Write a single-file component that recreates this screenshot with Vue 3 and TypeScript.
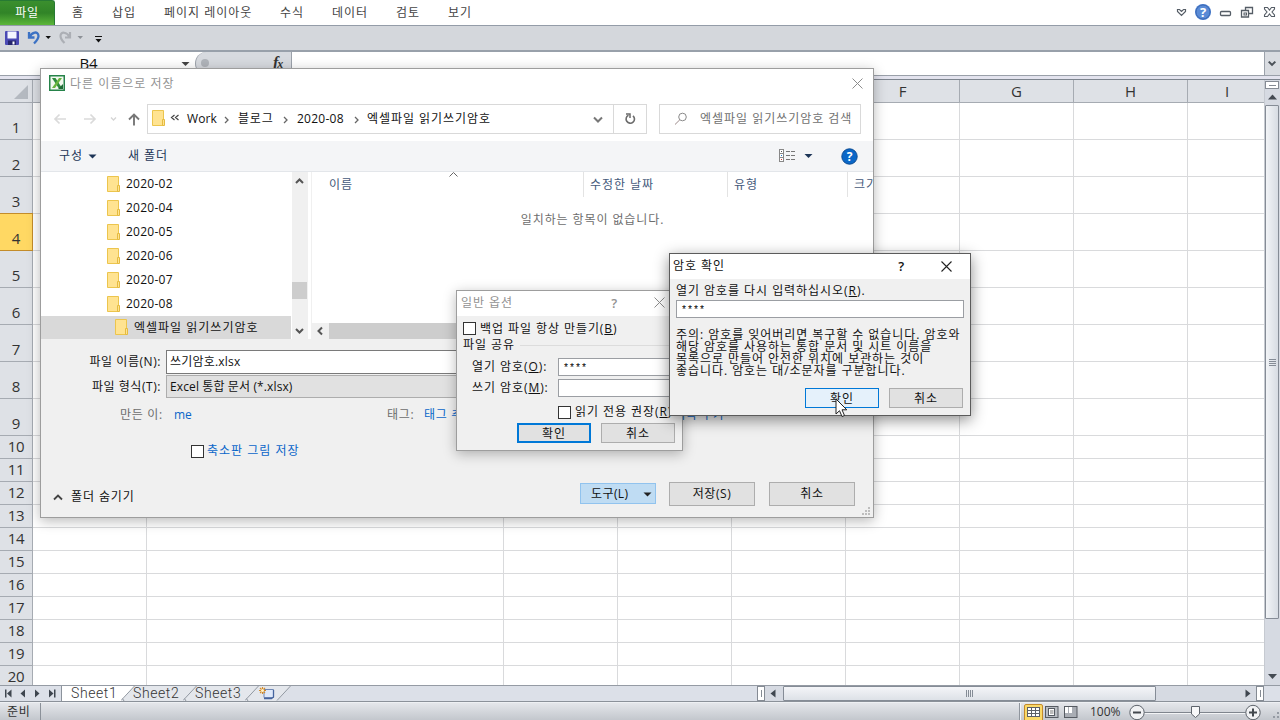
<script setup lang="ts">
interface Row { n: number; h: number }
const menus = [
  { label: '홈', cls: 'm1' },
  { label: '삽입', cls: 'm2' },
  { label: '페이지 레이아웃', cls: 'm3' },
  { label: '수식', cls: 'm4' },
  { label: '데이터', cls: 'm5' },
  { label: '검토', cls: 'm6' },
  { label: '보기', cls: 'm7' },
]
const columns = ['A', 'B', 'C', 'D', 'E', 'F', 'G', 'H', 'I']
const rows: Row[] = Array.from({ length: 20 }, (_, i) => ({ n: i + 1, h: i < 9 ? 37 : 23 }))
const folders = ['2020-02', '2020-04', '2020-05', '2020-06', '2020-07', '2020-08']
const crumbs = [
  { label: 'Work', cls: 'c1' },
  { label: '블로그', cls: 'c2' },
  { label: '2020-08', cls: 'c3' },
]
const warning = [
  { text: '주의: 암호를 잊어버리면 복구할 수 없습니다. 암호와', cls: 'w1' },
  { text: '해당 암호를 사용하는 통합 문서 및 시트 이름을', cls: 'w2' },
  { text: '목록으로 만들어 안전한 위치에 보관하는 것이', cls: 'w3' },
  { text: '좋습니다. 암호는 대/소문자를 구분합니다.', cls: 'w4' },
]
</script>

<template>
  <div class="screen">
    <!-- ribbon tabs -->
    <header class="ribbon">
      <div class="file-tab">파일</div>
      <nav class="menus"><span v-for="m in menus" :key="m.cls" :class="m.cls">{{ m.label }}</span></nav>
      <svg class="wincontrols" width="106" height="25" viewBox="0 0 106 25">
        <path d="M3.500 11.500v-2h2l2 2 2-2h2v2l-4 4z" fill="#fff" stroke="#555d66" stroke-width="1.2" />
        <circle cx="29" cy="12" r="8" fill="#4a7ed0" /><circle cx="29" cy="12" r="7" fill="#5a8bd6" stroke="#3b69b5" />
        <text x="29" y="17" text-anchor="middle" class="qm">?</text>
        <rect x="46.500" y="11.500" width="10" height="4" rx="1" fill="#fff" stroke="#555d66" stroke-width="1.3" />
        <path d="M71.500 7.500h7v6h-7z" fill="#fff" stroke="#555d66" stroke-width="1.3" />
        <path d="M67.500 10.500h7v6.500h-7z" fill="#fff" stroke="#555d66" stroke-width="1.3" />
        <rect x="70" y="13" width="2.500" height="2" fill="none" stroke="#555d66" />
        <path d="M90.500 7.500h3l2 2.500 2-2.500h3v1.500l-2.500 3 2.500 3v1.500h-3l-2-2.500-2 2.500h-3v-1.500l2.500-3-2.500-3z" fill="#fff" stroke="#555d66" stroke-width="1.1" />
      </svg>
    </header>

    <!-- quick access toolbar -->
    <div class="qat">
      <svg width="110" height="24" viewBox="0 0 110 24">
        <rect x="5" y="5" width="14" height="14" rx="1" fill="#4a49b4" />
        <rect x="7.500" y="5.500" width="9" height="7" fill="#f3f5ff" /><rect x="8" y="14.500" width="8" height="4.500" fill="#26266e" /><rect x="12.500" y="15.500" width="2" height="3" fill="#fff" />
        <path d="M29 6v5.500h5.500M29.500 11C32 6 38 4.500 38.500 10c0 3-2 5-4.500 7.500" fill="none" stroke="#3c72c4" stroke-width="2.300" />
        <path d="M45.500 10h5.500l-2.750 3z" fill="#111" />
        <path d="M70 6v5.500h-5M69.500 11C67 6 60.500 5 60.500 10c0 3 2 5 4 7" fill="none" stroke="#acafb5" stroke-width="2.200" />
        <path d="M77.500 10h5.500l-2.750 3z" fill="#8d9197" />
        <path d="M95 10.500h7" stroke="#111" /><path d="M95.500 13h6l-3 3.500z" fill="#111" />
      </svg>
    </div>

    <!-- formula bar -->
    <div class="formula">
      <span class="cellref">B4</span>
      <svg width="16" height="23" viewBox="0 0 16 23"><path d="M4.500 10h8l-4 4z" fill="#444" /></svg>
      <div class="fxbox"><i></i><em>f<small>x</small></em></div>
      <div class="finput"></div>
      <svg class="fexp" width="16" height="23" viewBox="0 0 16 23"><path d="M4 9.500l3.500 3.500L11 9.500" fill="none" stroke="#4b5158" stroke-width="2.200" /></svg>
    </div>
    <div class="rule"></div>

    <!-- worksheet -->
    <div class="work">
      <div class="sheet">
        <div class="colhead">
          <div class="corner"><svg width="14" height="14" viewBox="0 0 14 14"><path d="M14 0v14H0z" fill="#b4b9c0" /></svg></div>
          <div v-for="c in columns" :key="c" :class="['ch', 'k' + c]">{{ c }}</div>
        </div>
        <div v-for="r in rows" :key="r.n" :class="['row', r.h === 23 ? 'low' : '', r.n === 4 ? 'cur' : '']">
          <div class="rh">{{ r.n }}</div>
          <div v-for="c in columns" :key="c" :class="['cell', 'k' + c]"></div>
        </div>
      </div>
      <div class="vscroll">
        <div class="split"></div>
        <svg width="16" height="16" viewBox="0 0 16 16"><path d="M3 10.500h9l-4.500-5z" fill="#444a52" /></svg>
        <div class="vthumb"><i></i><i></i><i></i><i></i></div>
        <span class="grow"></span>
        <svg width="16" height="16" viewBox="0 0 16 16"><path d="M3 5h9l-4.500 5z" fill="#444a52" /></svg>
      </div>
    </div>

    <!-- sheet tabs and horizontal scroll bar -->
    <div class="tabs">
      <svg class="tnav" width="62" height="15" viewBox="0 0 62 15">
        <path d="M5 3.500h1.500v8H5zM11.500 3.500v8l-4.500-4zM25 3.500v8l-4.500-4zM35 3.500v8l4.500-4zM49 3.500v8l4.500-4zM54 3.500h1.500v8H54z" fill="#3f464f" />
        <path d="M61.500 0v15" stroke="#8c939c" />
      </svg>
      <div class="tab on"><span>Sheet1</span><svg width="14" height="15" viewBox="0 0 14 15"><path d="M0 0h14L1 15H0z" fill="#fff" /><path d="M13.500 0L0 15h14V0z" fill="#e4e7ec" /><path d="M13.500 0L0 14.500M3 15l-1.500-2.500" fill="none" stroke="#9299a2" /></svg></div>
      <div class="tab"><span>Sheet2</span><svg width="14" height="15" viewBox="0 0 14 15"><path d="M13.500 0L0 14.500M3 15l-1.500-2.500" fill="none" stroke="#9299a2" /></svg></div>
      <div class="tab"><span>Sheet3</span><svg width="14" height="15" viewBox="0 0 14 15"><path d="M13.500 0L0 14.500M3 15l-1.500-2.500" fill="none" stroke="#9299a2" /></svg></div>
      <div class="tab new">
        <svg width="32" height="15" viewBox="0 0 32 15"><path d="M32 0L18 15h14z" fill="#dce0e8" /><path d="M31.500 0L18 14.500" stroke="#9299a2" /><path d="M5 3.500h9.500v8H5z" fill="#dfe9fa" stroke="#7088b5" /><path d="M5 12.500h7.500l2-1.500v-7" fill="none" stroke="#46659f" stroke-width="1.300" /><path d="M3.500 1v7M0 4.500h7M1 2l5 5M6 2l-5 5" stroke="#d68b26" stroke-width="1.100" /><circle cx="3.500" cy="4.500" r="1.500" fill="#fff6cf" /></svg>
      </div>
      <span class="grow"></span>
      <div class="hscroll">
        <div class="hsplit"></div>
        <svg width="17" height="15" viewBox="0 0 17 15"><path d="M10.500 3.500v8l-5-4z" fill="#3f464f" /></svg>
        <div class="hthumb"><i></i><i></i><i></i><i></i></div>
        <span class="grow"></span>
        <svg width="17" height="15" viewBox="0 0 17 15"><path d="M6.500 3.500v8l5-4z" fill="#3f464f" /></svg>
        <div class="hsplit"></div>
        <div class="hcorner"></div>
      </div>
    </div>

    <!-- status bar -->
    <footer class="status">
      <span class="ready">준비</span>
      <span class="grow"></span>
      <svg width="66" height="18" viewBox="0 0 66 18">
        <path d="M5.500 0v18" stroke="#8f959d" /><path d="M6.500 0v18" stroke="#f4f5f7" />
        <path d="M10.500 18V3q0-1.500 1.500-1.500h15q1.500 0 1.500 1.500v15" fill="#fbd968" stroke="#c38a2b" />
        <rect x="13.500" y="4.500" width="12" height="9" fill="#fff" stroke="#5d6066" /><path d="M13.500 7.500h12M13.500 10.500h12M17.500 4.500v9M21.500 4.500v9" stroke="#5d6066" />
        <rect x="31.500" y="3.500" width="12.500" height="11" fill="#b9bdc3" stroke="#565b62" /><rect x="34.500" y="5.500" width="6" height="7" fill="#fff" stroke="#565b62" /><path d="M36 8h3.500M36 10h3.500" stroke="#777" />
        <rect x="50.500" y="3.500" width="12.500" height="11" fill="#a9adb4" stroke="#565b62" /><path d="M51 4h3v6h-3zM55 4h3v6h-3z" fill="#fff" />
      </svg>
      <span class="pct">100%</span>
      <svg class="zoomer" width="156" height="18" viewBox="0 0 156 18">
        <path d="M20 9.500h102" stroke="#7f858d" /><path d="M20 10.500h102" stroke="#f3f4f6" />
        <circle cx="13" cy="9.500" r="7.200" fill="#f1f2f4" stroke="#5e646c" /><path d="M9 9.500h8" stroke="#43484e" stroke-width="2" />
        <circle cx="129" cy="9.500" r="7.200" fill="#f1f2f4" stroke="#5e646c" /><path d="M125 9.500h8M129 5.500v8" stroke="#43484e" stroke-width="2" />
        <path d="M67.500 3.500h8V11l-4 3.500-4-3.500z" fill="#f8f8f9" stroke="#5e646c" />
        <path d="M153 9h2v2h-2zM149 13h2v2h-2zM153 13h2v2h-2z" fill="#959ba3" />
      </svg>
    </footer>

    <!-- save-as window -->
    <section class="win save">
      <div class="title">
        <svg width="16" height="16" viewBox="0 0 16 16"><rect x=".75" y=".75" width="14.500" height="14.500" fill="#f2f8ef" stroke="#26834a" stroke-width="1.500" /><path d="M3 3h3.500l6.500 10H9.500z" fill="#2c8b3c" /><path d="M10 3h3L6 13H3z" fill="#6ab43e" /><path d="M11 12l3-3v5h-5z" fill="#1e6b35" /></svg>
        <span>다른 이름으로 저장</span><span class="grow"></span>
        <svg class="x" width="11" height="11" viewBox="0 0 11 11"><path d="M.5.5l10 10M10.500.5l-10 10" stroke="#8c8c8c" /></svg>
      </div>
      <div class="navrow">
        <svg width="106" height="30" viewBox="0 0 106 30">
          <path d="M25 15H14M18.500 10.500L14 15l4.500 4.500" fill="none" stroke="#dadada" stroke-width="1.700" />
          <path d="M43 15h11M49.500 10.500L54 15l-4.500 4.500" fill="none" stroke="#dadada" stroke-width="1.700" />
          <path d="M70 13.500l2.500 2.500 2.500-2.500" fill="none" stroke="#d4d4d4" stroke-width="1.300" />
          <path d="M93 21.500V10.500M88 15.500l5-5 5 5" fill="none" stroke="#777" stroke-width="1.900" />
        </svg>
        <div class="address">
          <svg class="folder" width="14" height="17" viewBox="0 0 14 17"><path d="M.5.5h11v15H.5z" fill="#ffe391" stroke="#ecc54d" /><path d="M10.500 9.500h2v6h-2z" fill="#ffe391" stroke="#e5bb40" /></svg>
          <svg class="dbl" width="10" height="8" viewBox="0 0 10 8"><path d="M4.500 1L1.500 3.500l3 2.500M8.500 1L5.500 3.500l3 2.500" fill="none" stroke="#444" stroke-width="1.200" /></svg>
          <template v-for="c in crumbs" :key="c.cls">
            <span :class="c.cls">{{ c.label }}</span>
            <svg class="sep" width="6" height="8" viewBox="0 0 6 8"><path d="M1 1l3 3-3 3" fill="none" stroke="#666" stroke-width="1.300" /></svg>
          </template>
          <span class="c4">엑셀파일 읽기쓰기암호</span>
          <span class="grow"></span>
          <svg class="down" width="10" height="8" viewBox="0 0 10 8"><path d="M1 1.500l4 4 4-4" fill="none" stroke="#777" stroke-width="2" /></svg>
          <div class="refresh"><svg width="14" height="14" viewBox="0 0 14 14"><path d="M10 3.800A4.200 4.200 0 1 1 5.500 3.200" fill="none" stroke="#6b6b6b" stroke-width="1.600" /><path d="M3 2H7V6" fill="none" stroke="#6b6b6b" stroke-width="1.500" /></svg></div>
        </div>
        <div class="search">
          <svg width="14" height="14" viewBox="0 0 14 14"><circle cx="8.500" cy="5" r="3.800" fill="none" stroke="#8a8a8a" /><path d="M5.800 7.800L1 12.500" stroke="#9c8a8a" /></svg>
          <span>엑셀파일 읽기쓰기암호 검색</span>
        </div>
      </div>
      <div class="toolbar">
        <span class="org">구성</span>
        <svg width="9" height="5" viewBox="0 0 9 5"><path d="M.5.5h8L4.500 4.500z" fill="#1d3557" /></svg>
        <span class="newf">새 폴더</span><span class="grow"></span>
        <svg width="34" height="14" viewBox="0 0 34 14">
          <rect x=".5" y=".5" width="4" height="12" fill="#fff" stroke="#888" /><path d="M0 4.500h5M0 8.500h5" stroke="#888" /><path d="M2 2h1v1H2z" fill="#555" /><path d="M2 6h1v1H2z" fill="#267fd0" /><path d="M2 10h1v1H2z" fill="#d03a3a" />
          <path d="M7 2.500h4M12 2.500h4M7 6.500h4M12 6.500h4M7 10.500h4M12 10.500h4" stroke="#777" /><path d="M25.500 5h8l-4 4z" fill="#1d3557" />
        </svg>
        <svg class="help" width="17" height="17" viewBox="0 0 17 17"><circle cx="8.500" cy="8.500" r="7.700" fill="#0a67c8" stroke="#0a4a92" /><text x="8.500" y="13" text-anchor="middle" class="qm2">?</text></svg>
      </div>
      <div class="body">
        <div class="tree">
          <div v-for="f in folders" :key="f" class="node"><svg class="folder" width="14" height="17" viewBox="0 0 14 17"><path d="M.5.5h11v15H.5z" fill="#ffe391" stroke="#ecc54d" /><path d="M10.500 9.500h2v6h-2z" fill="#ffe391" stroke="#e5bb40" /></svg><span>{{ f }}</span></div>
          <div class="node sel"><svg class="folder" width="14" height="17" viewBox="0 0 14 17"><path d="M.5.5h11v15H.5z" fill="#ffe391" stroke="#ecc54d" /><path d="M10.500 9.500h2v6h-2z" fill="#ffe391" stroke="#e5bb40" /></svg><span>엑셀파일 읽기쓰기암호</span></div>
        </div>
        <div class="tscroll">
          <svg width="16" height="17" viewBox="0 0 16 17"><path d="M4 11l3.500-3.500L11 11" fill="none" stroke="#555" stroke-width="2" /></svg>
          <div class="tthumb"></div>
          <svg width="16" height="17" viewBox="0 0 16 17"><path d="M4 7l3.500 3.500L11 7" fill="none" stroke="#555" stroke-width="2" /></svg>
        </div>
        <div class="files">
          <div class="fh"><span class="f1">이름<svg width="9" height="5" viewBox="0 0 9 5"><path d="M.5 4.500l4-4 4 4" fill="none" stroke="#666" /></svg></span><span class="f2">수정한 날짜</span><span class="f3">유형</span><span class="f4">크기</span></div>
          <p class="empty">일치하는 항목이 없습니다.</p>
          <div class="fscroll"><svg width="17" height="16" viewBox="0 0 17 16"><path d="M10 4.500L6.500 8l3.500 3.500" fill="none" stroke="#555" stroke-width="2" /></svg><div></div></div>
        </div>
      </div>
      <div class="form">
        <div class="frow r1"><label>파일 이름(N):</label><div class="fname">쓰기암호.xlsx</div></div>
        <div class="frow r2"><label>파일 형식(T):</label><div class="ftype">Excel 통합 문서 (*.xlsx)</div></div>
        <div class="meta"><span class="a1">만든 이:</span><span class="a2">me</span><span class="a3">태그:</span><span class="a4">태그 추가</span><span class="a5">제목 추가</span></div>
        <div class="thumbrow"><i class="box"></i><span>축소판 그림 저장</span></div>
        <div class="actions">
          <svg class="chev" width="10" height="7" viewBox="0 0 10 7"><path d="M1 5.500l4-4 4 4" fill="none" stroke="#444" stroke-width="1.800" /></svg>
          <span class="hide">폴더 숨기기</span><span class="grow"></span>
          <div class="tools">도구(L)<svg width="9" height="5" viewBox="0 0 9 5"><path d="M.5.5h8L4.500 4.500z" fill="#222" /></svg></div>
          <div class="btn">저장(S)</div><div class="btn last">취소</div>
        </div>
        <div class="griprow"><svg width="9" height="9" viewBox="0 0 9 9"><path d="M6 0h2v2H6zM3 3h2v2H3zM6 3h2v2H6zM0 6h2v2H0zM3 6h2v2H3zM6 6h2v2H6z" fill="#bdbdbd" /></svg></div>
      </div>
    </section>

    <!-- general options window -->
    <section class="win general">
      <div class="title"><span>일반 옵션</span><span class="grow"></span><b>?</b><svg class="x" width="11" height="11" viewBox="0 0 11 11"><path d="M.5.5l10 10M10.500.5l-10 10" stroke="#8c8c8c" /></svg></div>
      <div class="g1"><i class="box"></i><span>백업 파일 항상 만들기(<u>B</u>)</span></div>
      <div class="g2"><span>파일 공유</span><hr></div>
      <div class="g3"><label>열기 암호(<u>O</u>):</label><div class="inp">****</div></div>
      <div class="g3 g4"><label>쓰기 암호(<u>M</u>):</label><div class="inp"></div></div>
      <div class="g5"><i class="box"></i><span>읽기 전용 권장(<u>R</u>)</span></div>
      <div class="g6"><div class="btn def">확인</div><div class="btn">취소</div></div>
    </section>

    <!-- password confirmation window -->
    <section class="win confirm">
      <div class="title"><span>암호 확인</span><span class="grow"></span><b>?</b><svg class="x" width="11" height="11" viewBox="0 0 11 11"><path d="M.5.5l10 10M10.500.5l-10 10" stroke="#222" stroke-width="1.100" /></svg></div>
      <p class="ask">열기 암호를 다시 입력하십시오(<u>R</u>).</p>
      <div class="inp">****</div>
      <div class="warn"><p v-for="w in warning" :key="w.cls" :class="w.cls">{{ w.text }}</p></div>
      <div class="cbtns"><div class="btn hot">확인</div><div class="btn">취소</div></div>
    </section>

    <svg class="cursor" width="13" height="20" viewBox="0 0 13 20"><path d="M1 1v15l3.500-3.300L7 18.500l2.500-1-2.500-5.700h4.800z" fill="#fff" stroke="#222" /></svg>
  </div>
</template>

<style>
html, body { margin: 0; overflow: hidden; }
</style>
<style scoped>
* { box-sizing: border-box; }
p { margin: 0; }
svg { display: block; flex: none; }
.screen { position: relative; width: 1280px; height: 720px; overflow: hidden; background: #fff; display: flex; flex-direction: column; font: 12px/16px "Open Sans", "Noto Sans CJK KR", sans-serif; letter-spacing: .6px; color: #111; white-space: nowrap; }
.grow { flex: 1; }
.ribbon { height: 26px; border-bottom: 1px solid #949ca8; display: flex; flex: none; color: #444; }
.file-tab { width: 55px; height: 25px; background: linear-gradient(#3b8f2e, #318427 50%, #5cb63a); border: 1px solid #277a33; border-width: 1px 1px 0 0; border-radius: 0 3px 0 0; color: #fff; text-align: center; line-height: 23px; letter-spacing: .8px; }
.menus { flex: 1; display: flex; line-height: 25px; padding-left: 17px; letter-spacing: 1px; }
.m1 { width: 40px; } .m2 { width: 52px; } .m3 { width: 116px; } .m4 { width: 52px; } .m5 { width: 64px; } .m6 { width: 52px; }
.qm { font: bold 13px "Open Sans"; fill: #fff; letter-spacing: 0; }
.qm2 { font: bold 12px "Open Sans"; fill: #fff; letter-spacing: 0; }
.qat { height: 26px; flex: none; background: #d4d7dc; border-bottom: 2px solid #98a0aa; }
.formula { height: 23px; flex: none; display: flex; }
.cellref { width: 177px; text-align: center; font-size: 15px; line-height: 23px; letter-spacing: -.2px; }
.fxbox { width: 97px; margin-left: 2px; background: #d7dadf; border: 1px solid #9ba1aa; border-width: 0 1px 0 1px; border-radius: 12px 0 0 12px; display: flex; align-items: center; }
.fxbox i { width: 8px; height: 8px; border-radius: 4px; background: #b0b4ba; margin: 0 0 2px 5px; }
.fxbox em { margin-left: 64px; font: italic bold 16px/22px "Liberation Serif", serif; letter-spacing: -1px; color: #333; }
.fxbox small { font-size: 12px; }
.finput { flex: 1; }
.fexp { background: #d9dce1; border-left: 1px solid #9ba1aa; }
.rule { height: 5px; flex: none; border-top: 1px solid #9aa0a9; border-bottom: 1px solid #7d848e; background: #e3e3ee; }
.work { height: 605px; flex: none; display: flex; }
.sheet { width: 1264px; overflow: hidden; }
.colhead, .row { display: flex; }
.colhead { height: 23px; background: #dee1e6; border-bottom: 1px solid #a6abb2; font-size: 15px; line-height: 22px; letter-spacing: 0; color: #333; }
.corner { width: 33px; flex: none; border-right: 1px solid #a6abb2; padding: 5px 0 0 14px; }
.ch, .cell { width: 114px; flex: none; border-right: 1px solid #a6abb2; text-align: center; }
.ch.kB, .cell.kB { width: 357px; }
.ch.kI, .cell.kI { width: 78px; border-right: 0; }
.row { height: 37px; }
.row.low { height: 23px; }
.cell { border-right-color: #d9dadc; border-bottom: 1px solid #d9dadc; }
.rh { width: 33px; flex: none; background: #dee1e6; border-right: 1px solid #a6abb2; border-bottom: 1px solid #a6abb2; display: flex; align-items: flex-end; justify-content: center; font-size: 15px; line-height: 23px; letter-spacing: -.3px; color: #333; }
.cur .rh { background: #ffd863; border-color: #c38c2a; box-shadow: 0 -1px #c38c2a; }
.vscroll { width: 16px; background: #d6dae2; display: flex; flex-direction: column; border-left: 1px solid #c6cad1; }
.split { height: 8px; margin: 1px 1px 0 0; border: 1px solid #858b94; background: #fff linear-gradient(#858b94, #858b94) center / 7px 1px no-repeat; flex: none; }
.vthumb { height: 514px; margin-right: 1px; border: 1px solid #858c96; border-radius: 1px; background: linear-gradient(90deg, #f2f4f7, #d7dce3); display: flex; flex-direction: column; align-items: center; justify-content: center; gap: 1px; }
.vthumb i { width: 7px; height: 1px; background: #858c96; }
.tabs { height: 17px; flex: none; border-top: 1px solid #959ba4; border-bottom: 1px solid #8b9199; background: #dce0e8; display: flex; }
.tab { display: flex; background: #e4e7ec; font: 300 14px/14px Roboto, sans-serif; letter-spacing: .6px; color: #333; }
.tab span { width: 48px; text-indent: -2px; }
.tab.on { background: #fff; }
.tab.on span { width: 59px; padding-left: 11px; }
.hscroll { width: 523px; display: flex; background: #d6dae2; }
.hsplit { width: 8px; border: 1px solid #858b94; background: #fff linear-gradient(#858b94, #858b94) center / 1px 7px no-repeat; }
.hthumb { width: 373px; margin-left: 1px; border: 1px solid #858c96; border-radius: 1px; background: linear-gradient(#f4f5f8, #dde1e7); display: flex; align-items: center; justify-content: center; gap: 1px; }
.hthumb i { width: 1px; height: 7px; background: #858c96; }
.hcorner { width: 16px; background: #dce0e8; }
.status { height: 18px; flex: none; background: linear-gradient(#e4e6ea, #c3c7cd); display: flex; border-top: 1px solid #eef0f3; color: #333; line-height: 17px; }
.ready { width: 41px; padding-left: 7px; border-right: 1px solid #8b9199; }
.pct { width: 44px; padding-left: 10px; letter-spacing: 0; }

.win { position: absolute; background: #f0f0f0; border: 1px solid #9d9d9d; box-shadow: 0 3px 12px rgba(0, 0, 0, .28); }
.title { display: flex; align-items: center; background: #fff; color: #929292; }
.title b { font: 600 13px/16px "Open Sans"; }
.save { left: 40px; top: 68px; width: 834px; height: 450px; overflow: hidden; }
.save .title { height: 28px; padding: 0 10px 0 8px; }
.save .title span:first-of-type { margin: 2px 0 0 5px; letter-spacing: 1px; }
.navrow { height: 44px; background: #fff; display: flex; padding: 7px 0; }
.address { width: 500px; height: 30px; border: 1px solid #d9d9d9; display: flex; align-items: center; padding-left: 4px; letter-spacing: .8px; }
.address .folder { margin-bottom: 1px; }
.dbl { margin: 0 7px 2px 4px; }
.c1 { width: 37px; letter-spacing: .1px; } .c2 { width: 45px; } .c3 { width: 57px; letter-spacing: .25px; } .c4 { letter-spacing: .95px; margin-left: -1px; }
.sep { margin: 1px 8px 0 0; }
.c1, .c2, .c3 { flex: none; }
.down { margin: 2px 10px 0 0; }
.refresh { width: 33px; height: 28px; border-left: 1px solid #d9d9d9; display: flex; align-items: center; justify-content: center; }
.search { width: 202px; height: 30px; margin-left: 12px; border: 1px solid #d9d9d9; display: flex; align-items: center; padding-left: 14px; color: #707070; letter-spacing: .97px; }
.search span { margin: 0 0 0 12px; }
.toolbar { height: 31px; background: #f4f5f7; border-bottom: 1px solid #e3e6ea; display: flex; align-items: center; padding: 0 15px 0 18px; color: #1d3557; letter-spacing: .9px; }
.org { width: 29px; }
.newf { margin-left: 31px; }
.help { margin-left: 28px; }
.body { height: 167px; display: flex; background: #fff; }
.tree { width: 251px; }
.node { height: 24px; display: flex; align-items: center; padding-left: 66px; letter-spacing: .25px; }
.node span { margin-left: 5px; }
.node.sel { height: 23px; background: #d9d9d9; padding-left: 74px; letter-spacing: 1px; margin-right: 1px; }
.tscroll { width: 16px; background: #f0f0f0; display: flex; flex-direction: column; }
.tthumb { height: 17px; margin: 93px 1px 23px 0; background: #cdcdcd; }
.files { flex: 1; min-width: 0; margin-left: 3px; border-left: 1px solid #f0f0f0; overflow: hidden; display: flex; flex-direction: column; }
.fh { display: flex; height: 25px; line-height: 25px; color: #44597a; letter-spacing: .95px; }
.fh span { flex: none; border-right: 1px solid #e3e3e3; padding-left: 6px; }
.fh .f1 { width: 272px; padding-left: 17px; display: flex; } .f1 svg { margin-left: 96px; } .f2 { width: 144px; } .f3 { width: 120px; } .f4 { width: 60px; }
.empty { color: #6d6d6d; text-align: center; margin: 14px 0 0; line-height: 18px; letter-spacing: .9px; }
.fscroll { margin-top: auto; height: 16px; background: #f0f0f0; display: flex; }
.fscroll div { width: 400px; background: #cdcdcd; }
.form { height: 180px; padding-top: 11px; }
.frow { display: flex; height: 23px; line-height: 23px; }
.frow label { width: 125px; text-align: right; padding-right: 5px; letter-spacing: .55px; }
.fname, .ftype { width: 689px; height: 24px; border: 1px solid #7a7a7a; background: #fff; padding-left: 3px; line-height: 21px; letter-spacing: .2px; }
.r2 { margin-top: 2px; }
.ftype { height: 23px; background: #e1e1e1; border-color: #adadad; line-height: 22px; letter-spacing: .12px; }
.meta { display: flex; height: 16px; margin-top: 9px; color: #6d6d6d; padding-left: 79px; letter-spacing: .7px; }
.a1 { width: 54px; } .a2 { width: 213px; letter-spacing: 0; } .a3 { width: 37px; } .a4 { width: 250px; } .a2, .a4, .a5 { color: #0a66c9; }
.thumbrow { display: flex; align-items: center; margin: 20px 0 0 150px; color: #0a66c9; height: 16px; letter-spacing: 1px; }
.box { width: 13px; height: 13px; border: 1px solid #333; background: #fff; flex: none; }
.thumbrow .box { margin: 1px 3px 0 0; }
.actions { display: flex; align-items: center; margin-top: 23px; height: 24px; padding: 0 18px 0 12px; }
.chev { margin: 6px 0 0; }
.hide { margin: 5px 0 0 8px; letter-spacing: .9px; }
.btn { display: flex; align-items: center; justify-content: center; background: #e1e1e1; border: 1px solid #adadad; }
.actions .btn { width: 86px; height: 24px; }
.actions .last { margin-left: 14px; }
.tools { width: 76px; height: 21px; margin: 0 13px 1px 0; background: #bfdcf3; border: 1px solid #91c3ee; display: flex; align-items: center; padding: 1px 0 0 10px; letter-spacing: .4px; }
.tools svg { margin-left: 15px; }
.griprow { display: flex; justify-content: flex-end; padding-right: 2px; margin-top: 1px; }

.general { left: 456px; top: 290px; width: 227px; height: 161px; letter-spacing: .93px; }
.general .title { height: 25px; padding: 0 17px 2px 4px; }
.general b { margin-right: 36px; }
.g1 { display: flex; align-items: center; height: 16px; margin: 4px 0 0 6px; } .g1 span { margin: 1px 0 0 4px; }
.g2 { display: flex; align-items: center; height: 16px; margin-top: 1px; padding-left: 6px; } .g2 hr { flex: 1; border: 0; border-top: 1px solid #dcdcdc; margin: 0 0 0 5px; }
.g3 { display: flex; height: 18px; line-height: 17px; margin-top: 5px; } .g4 { margin-top: 3px; }
.g3 label { width: 101px; padding-left: 15px; }
.inp { background: #fff; border: 1px solid #9b9ea3; padding: 4px 0 0 4px; font: 10px/12px "Liberation Mono", monospace; letter-spacing: 0; color: #000; }
.g3 .inp { width: 118px; }
.g5 { display: flex; align-items: center; height: 16px; margin: 7px 0 0 101px; } .g5 span { margin: 0 0 0 4px; }
.g6 { display: flex; margin: 3px 0 0 60px; gap: 10px; }
.g6 .btn, .cbtns .btn { width: 74px; height: 20px; padding-top: 1px; }
.btn.def { border: 2px solid #0078d7; }
.confirm { left: 669px; top: 253px; width: 302px; height: 163px; border-color: #5b5b5b; box-shadow: 0 4px 14px rgba(0, 0, 0, .45); letter-spacing: .95px; }
.confirm .title { height: 25px; color: #111; padding: 0 18px 1px 3px; }
.confirm b { margin-right: 36px; }
.ask { margin: 3px 0 0 6px; line-height: 18px; }
.confirm .inp { width: 288px; height: 18px; margin: 0 0 0 6px; }
.warn { margin: 11px 0 0 6px; line-height: 12px; }
.cbtns { display: flex; gap: 10px; margin: 11px 0 0 135px; }
.btn.hot { border-color: #0078d7; background: #e5f1fb; }
.cursor { position: absolute; left: 835px; top: 398px; }
</style>
